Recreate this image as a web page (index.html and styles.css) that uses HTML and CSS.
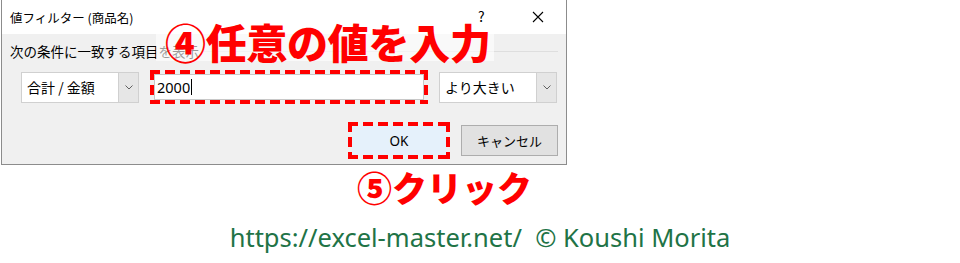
FILE: index.html
```html
<!DOCTYPE html>
<html lang="ja">
<head>
<meta charset="utf-8">
<title>値フィルター</title>
<link rel="stylesheet" href="styles.css">
</head>
<body>
<div class="page">
  <div class="dialog">
    <div class="titlebar">
      <span class="title">値フィルター (商品名)</span>
      <span class="help">?</span>
      <svg class="close" width="12" height="12" viewBox="0 0 12 12"><path d="M1 1L11 11M11 1L1 11" stroke="#000" stroke-width="1.1" fill="none"/></svg>
    </div>
    <div class="body">
      <div class="group">
        <span class="label">次の条件に一致する項目を表示</span>
        <span class="rule"></span>
      </div>
      <div class="row">
        <div class="combo">
          <span class="val">合計 / 金額</span>
          <span class="drop"><svg width="8" height="5" viewBox="0 0 8 5"><path d="M0.5 0.5L4 4L7.5 0.5" stroke="#606060" stroke-width="1" fill="none"/></svg></span>
        </div>
        <div class="hl input-hl">
          <div class="input">2000<span class="caret"></span></div>
        </div>
        <div class="combo">
          <span class="val">より大きい</span>
          <span class="drop"><svg width="8" height="5" viewBox="0 0 8 5"><path d="M0.5 0.5L4 4L7.5 0.5" stroke="#606060" stroke-width="1" fill="none"/></svg></span>
        </div>
      </div>
      <div class="buttons">
        <div class="hl ok-hl"><div class="btn ok">OK</div></div>
        <div class="btn cancel">キャンセル</div>
      </div>
    </div>
    <div class="note n1">④任意の値を入力</div>
  </div>
  <div class="note n2">⑤クリック</div>
  <div class="footer">https://excel-master.net/&nbsp;&nbsp;© Koushi Morita</div>
</div>
</body>
</html>
```
FILE: styles.css
```css
* { box-sizing: border-box; }
html, body { margin: 0; padding: 0; background: #fff; }
body { font-family: "Noto Sans CJK JP", "Noto Sans", sans-serif; }
.page { width: 960px; height: 263px; overflow: hidden; }

.dialog {
  position: relative;
  margin-left: 1px;
  width: 566px;
  height: 165px;
  border-left: 1px solid #8c8c8c;
  border-right: 1px solid #8c8c8c;
  border-bottom: 1px solid #8c8c8c;
  display: flex;
  flex-direction: column;
}
.titlebar {
  height: 34px;
  background: #fff;
  display: flex;
  align-items: center;
  padding-left: 8px;
  font-size: 12.5px;
  color: #000;
}
.title { flex: 1; }
.help { width: 14px; font-size: 14px; line-height: 14px; margin-right: 40px; margin-top: -3px; }
.close { margin-right: 22px; }

.body {
  flex: 1;
  background: #f0f0f0;
  padding: 8px 8px 0 8px;
}
.group { display: flex; align-items: center; height: 18px; font-size: 13.5px; color: #000; }
.rule { flex: 1; height: 1px; background: #dedede; margin-left: 4px; }

.row {
  margin-top: 10px;
  margin-left: 11px;
  display: flex;
  align-items: center;
  gap: 11px;
  height: 34px;
}
.combo {
  width: 118px;
  height: 31px;
  background: #fff;
  border: 1px solid #d0d0d0;
  display: flex;
  align-items: stretch;
  font-size: 14px;
}
.combo .val { flex: 1; display: flex; align-items: center; padding-left: 5px; white-space: pre; }
.drop {
  width: 20px;
  background: #e6e6e6;
  border-left: 1px solid #d0d0d0;
  display: flex;
  align-items: center;
  justify-content: center;
}
.hl {
  padding: 4px;
  background:
    repeating-linear-gradient(90deg, #ff0000 0 10px, transparent 10px 15px) left top / 100% 4px no-repeat,
    repeating-linear-gradient(90deg, #ff0000 0 10px, transparent 10px 15px) left bottom / 100% 4px no-repeat,
    repeating-linear-gradient(180deg, #ff0000 0 10px, transparent 10px 15px) left top / 4px 100% no-repeat,
    repeating-linear-gradient(180deg, #ff0000 0 10px, transparent 10px 15px) right top / 4px 100% no-repeat;
}
.input-hl { width: 278px; height: 34px; }
.input {
  height: 100%;
  background: #fff;
  border: 1px solid #c8c8c8;
  display: flex;
  align-items: center;
  padding-left: 2px;
  font-family: "Noto Sans", sans-serif;
  font-size: 14.5px;
}
.caret { width: 1px; height: 16px; background: #000; margin-left: 1px; }

.buttons {
  margin-top: 18px;
  display: flex;
  justify-content: flex-end;
  align-items: center;
  gap: 11px;
}
.btn {
  display: flex;
  align-items: center;
  justify-content: center;
  font-size: 13px;
}
.ok-hl { width: 102px; height: 37px; }
.ok { height: 100%; background: #e5f1fb; font-family: "Noto Sans", sans-serif; font-size: 13.5px; }
.cancel { width: 97px; height: 31px; background: #e1e1e1; border: 1px solid #adadad; }

.note { color: #ff0000; font-weight: 900; font-family: "Noto Sans CJK JP", sans-serif; }
.n1 {
  position: absolute;
  left: 154px;
  top: 22px;
  width: 338px;
  height: 39px;
  background: rgba(255,255,255,0.6);
  font-size: 41px;
  line-height: 39px;
  padding-left: 9px;
  white-space: nowrap;
  letter-spacing: -0.3px;
}
.n2 {
  margin-left: 357px;
  font-size: 35px;
  line-height: 44px;
  white-space: nowrap;
}
.footer {
  margin-top: 12px;
  text-align: center;
  color: #217346;
  font-family: "Noto Sans", sans-serif;
  font-size: 25.5px;
  line-height: 32px;
}
```
